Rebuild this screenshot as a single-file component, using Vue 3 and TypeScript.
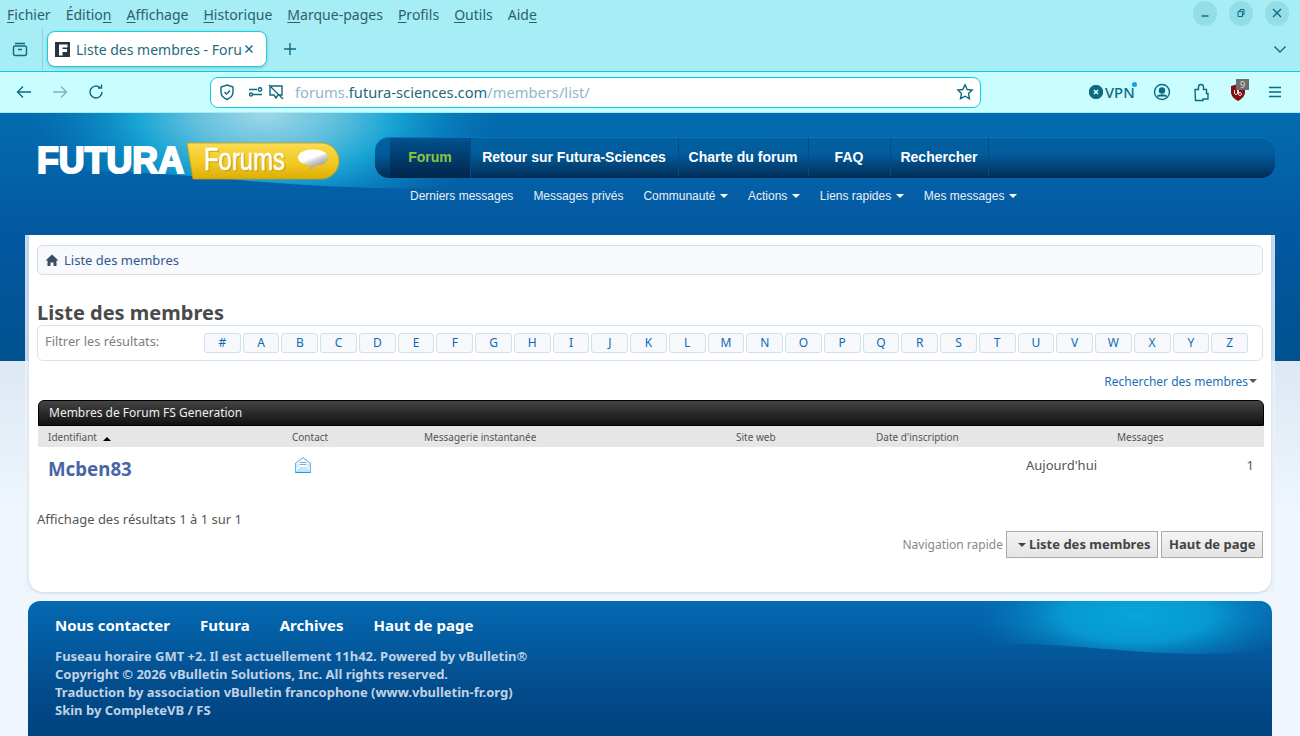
<template>
  <div class="browser">
    <div class="menubar">
      <nav class="menus">
        <span v-for="m in menus" :key="m.label" class="menu"><template v-for="(c, i) in m.label" :key="i"><u v-if="i === m.key">{{ c }}</u><template v-else>{{ c }}</template></template></span>
      </nav>
      <div class="winbtns">
        <span class="winbtn"><svg width="12" height="12" viewBox="0 0 12 12"><path d="M2.500 9h7" /></svg></span>
        <span class="winbtn"><svg class="thin" width="12" height="12" viewBox="0 0 12 12"><path d="M3 4.500h4.500v5h-4.500zM5 4.500v-2h4v5h-1.500" /></svg></span>
        <span class="winbtn"><svg width="12" height="12" viewBox="0 0 12 12"><path d="M2 2l8 8M10 2l-8 8" /></svg></span>
      </div>
    </div>
    <div class="tabbar">
      <span class="sidebtn">
        <svg width="18" height="18" viewBox="0 0 18 18"><path d="M4 3.500h10M2.500 7.500a1.500 1.500 0 0 1 1.500-1.500h10a1.500 1.500 0 0 1 1.500 1.500v6a2 2 0 0 1-2 2h-9a2 2 0 0 1-2-2zM7 9.500h4" /></svg>
      </span>
      <div class="tab">
        <span class="favicon"><svg width="15" height="15" viewBox="0 0 15 15"><rect width="15" height="15" fill="#2a3342" stroke="none" /><path d="M4 2.500h8.500v3h-5v1.500h4.500v3h-4.500v3.500h-3.500z" fill="#fff" stroke="none" /></svg></span>
        <span class="tabtitle">Liste des membres - Forum FS Generation</span>
        <svg class="tabclose" width="10" height="10" viewBox="0 0 10 10"><path d="M1.500 1.500l7 7M8.500 1.500l-7 7" /></svg>
      </div>
      <svg class="newtab" width="14" height="14" viewBox="0 0 14 14"><path d="M7 1v12M1 7h12" /></svg>
      <svg class="tabmenu" width="14" height="14" viewBox="0 0 14 14"><path d="M1.500 4.500l5.500 5.500 5.500-5.500" /></svg>
    </div>
    <div class="navbar">
      <svg class="nicon" width="18" height="18" viewBox="0 0 18 18"><path d="M16 9h-13M8 3.500l-5.500 5.500 5.500 5.500" /></svg>
      <svg class="nicon dim" width="18" height="18" viewBox="0 0 18 18"><path d="M2 9h13M10 3.500l5.500 5.500-5.500 5.500" /></svg>
      <svg class="nicon" width="18" height="18" viewBox="0 0 18 18"><path d="M15 9a6 6 0 1 1-2-4.500M14.500 1.500v3.500h-3.500" /></svg>
      <div class="urlbar">
        <svg class="uicon" width="18" height="18" viewBox="0 0 18 18"><path d="M9 2l6 2v5c0 3.500-2.500 6-6 7.500-3.500-1.500-6-4-6-7.500v-5zM6.500 9l2 2 3.500-3.500" /></svg>
        <svg class="uicon perm" width="16" height="16" viewBox="0 0 16 16"><path d="M1 5.500h8M5 10.500h9" /><circle cx="12" cy="5.500" r="1.700" /><circle cx="3" cy="10.500" r="1.500" /></svg>
        <svg class="uicon" width="18" height="18" viewBox="0 0 18 18"><path d="M3 3h12v9h-4l-2 3-2-3h-4zM2 2l14 14" /></svg>
        <span class="url"><span class="faint">forums.</span>futura-sciences.com<span class="faint">/members/list/</span></span>
        <svg class="uicon star" width="18" height="18" viewBox="0 0 18 18"><path d="M9 1.800l2.200 4.700 5 .6-3.700 3.500 1 5.100-4.500-2.500-4.500 2.500 1-5.100-3.700-3.500 5-.6z" /></svg>
      </div>
      <div class="tools">
        <span class="vpn"><svg width="14" height="14" viewBox="0 0 14 14"><circle cx="7" cy="7" r="6.500" fill="#0e6a80" /><path d="M5 5l4 4M9 5l-4 4" stroke="#d8ffff" stroke-width="1.600" /></svg>VPN<i class="dot"></i></span>
        <svg class="nicon" width="18" height="18" viewBox="0 0 18 18"><circle cx="9" cy="9" r="7.500" /><circle cx="9" cy="7.500" r="2.500" fill="#0e6a80" /><path d="M4.500 13.500c1-2 8-2 9 0" fill="#0e6a80" /></svg>
        <svg class="nicon" width="18" height="20" viewBox="0 0 18 20"><path d="M3 7.500h3.500v-2.500a2.500 2.500 0 0 1 5 0v2.500h3v4h1.500v5.500h-5v1.500h-7.500z" /></svg>
        <span class="ublock">
          <svg width="16" height="18" viewBox="0 0 16 18"><path d="M1 3l7-2 7 2v6c0 4-3 7-7 9-4-2-7-5-7-9z" fill="#800f0f" stroke="none" /><path d="M4.500 7v3a1.500 1.500 0 0 0 3 0v-3M8.500 5v6a1.500 1.500 0 0 0 3 0 1.500 1.500 0 0 0-3 0" stroke="#f2d6d6" stroke-width="1" /></svg>
          <b class="badge">9</b>
        </span>
        <svg class="nicon" width="16" height="16" viewBox="0 0 16 16"><path d="M2 3.500h12M2 8h12M2 12.500h12" /></svg>
      </div>
    </div>
  </div>

  <div class="page">
    <header class="head">
      <svg class="headglow" width="520" height="100" viewBox="0 0 520 100" aria-hidden="true">
        <defs>
          <radialGradient id="hglow" gradientUnits="userSpaceOnUse" cx="0" cy="0" r="1" gradientTransform="translate(265 0) scale(235 120)">
            <stop offset="0" stop-color="#a0d8e8" />
            <stop offset="0.3" stop-color="#62c0dd" />
            <stop offset="0.55" stop-color="#18a4d4" />
            <stop offset="0.8" stop-color="#0a86c2" stop-opacity=".6" />
            <stop offset="1" stop-color="#0a78b8" stop-opacity="0" />
          </radialGradient>
        </defs>
        <path d="M20 0H520V72C430 78 340 76 250 68C180 62 110 56 20 58Z" fill="url(#hglow)" />
      </svg>
      <a class="logo" aria-label="Futura Forums">
        <svg width="310" height="50" viewBox="0 0 310 50">
          <defs>
            <linearGradient id="gold" x1="0" y1="0" x2="0" y2="1">
              <stop offset="0" stop-color="#fbdc50" />
              <stop offset="0.55" stop-color="#f2c823" />
              <stop offset="1" stop-color="#dcae05" />
            </linearGradient>
            <linearGradient id="bubble" x1="0.2" y1="0" x2="0.8" y2="1">
              <stop offset="0" stop-color="#fff" />
              <stop offset="0.4" stop-color="#fff" />
              <stop offset="0.55" stop-color="#d4d4d4" />
              <stop offset="1" stop-color="#7e7e7e" />
            </linearGradient>
          </defs>
          <path d="M150 7h134a18 18 0 0 1 0 36h-128z" fill="url(#gold)" stroke="#c89e12" stroke-width=".8" />
          <text x="0" y="37" class="futura" textLength="147" lengthAdjust="spacingAndGlyphs">FUTURA</text>
          <text x="168" y="35" class="forums shadow" textLength="81" lengthAdjust="spacingAndGlyphs">Forums</text>
          <text x="167" y="34" class="forums" textLength="81" lengthAdjust="spacingAndGlyphs">Forums</text>
          <path d="M276 13.500c9 0 15 3 15 8s-6 8-12 8l-6 4.500 1-4.500c-6-.5-13-3-13-8s7-8 15-8z" fill="url(#bubble)" />
        </svg>
      </a>
      <div class="navs">
        <ul class="tabs">
          <li v-for="t in navTabs" :key="t.label" :class="{ on: t.on }" :style="{ width: t.w + 'px' }">{{ t.label }}</li>
        </ul>
        <ul class="subnav">
          <li v-for="s in subNav" :key="s.label">{{ s.label }}<i v-if="s.drop" class="caret"></i></li>
        </ul>
      </div>
    </header>

    <div class="wrap">
      <main class="panel">
        <div class="crumb">
          <svg width="14" height="14" viewBox="0 0 14 14"><path d="M7 1.500l6.500 6h-2v5.500h-3v-3.500h-3v3.500h-3v-5.500h-2z" fill="#3d4c5f" /></svg>
          <span>Liste des membres</span>
        </div>
        <h1>Liste des membres</h1>
        <div class="filter">
          <span class="flabel">Filtrer les résultats:</span>
          <div class="letters">
            <a v-for="l in letters" :key="l">{{ l }}</a>
          </div>
        </div>
        <div class="search">Rechercher des membres<i class="caret grey"></i></div>

        <section class="members">
          <div class="mhead">Membres de Forum FS Generation</div>
          <div class="cols">
            <span>Identifiant <i class="sort"></i></span>
            <span>Contact</span>
            <span>Messagerie instantanée</span>
            <span>Site web</span>
            <span>Date d'inscription</span>
            <span>Messages</span>
          </div>
          <div class="row">
            <a class="uname">Mcben83</a>
            <svg class="mail" width="16" height="16" viewBox="0 0 16 16">
              <path d="M.5 6l7.500-5.500 7.500 5.500v9.500h-15z" fill="#dff1fd" stroke="#58b4f0" />
              <path d="M3.500 5l4.500-3 4.500 3v6h-9z" fill="#fafcfe" />
              <path d="M4.500 5.500h7M4.500 7.500h7" stroke="#9aa9b6" />
              <path d="M1 15l5-4.500h4l5 4.500zM1 7.500l5 3M15 7.500l-5 3" fill="#c4e6fb" stroke="#a8d8f6" stroke-width=".6" />
              <path d="M.5 15.500h15" stroke="#1c9cec" />
            </svg>
            <span class="joined">Aujourd'hui</span>
            <span class="count">1</span>
          </div>
        </section>

        <p class="results">Affichage des résultats 1 à 1 sur 1</p>
        <div class="quick">
          <span class="qlabel">Navigation rapide</span>
          <button type="button" class="qfirst"><i class="caret dark"></i>Liste des membres</button>
          <button type="button">Haut de page</button>
        </div>
      </main>
    </div>

    <footer class="foot">
      <svg class="glow" width="340" height="70" viewBox="0 0 340 70" aria-hidden="true">
        <defs>
          <radialGradient id="fglow" gradientUnits="userSpaceOnUse" cx="0" cy="0" r="1" gradientTransform="translate(205 14) scale(165 60)">
            <stop offset="0" stop-color="#08a6d8" />
            <stop offset="0.45" stop-color="#079fd4" stop-opacity=".9" />
            <stop offset="1" stop-color="#0678ba" stop-opacity="0" />
          </radialGradient>
        </defs>
        <path d="M0 0H340V48C290 54 250 54 200 50C150 46 110 42 60 43C40 43 20 44 0 46Z" fill="url(#fglow)" />
      </svg>
      <ul class="flinks">
        <li v-for="f in footLinks" :key="f">{{ f }}</li>
      </ul>
      <p v-for="l in footLines" :key="l">{{ l }}</p>
    </footer>
  </div>
</template>

<script setup lang="ts">
const menus = [
  { label: 'Fichier', key: 0 },
  { label: 'Édition', key: 6 },
  { label: 'Affichage', key: 0 },
  { label: 'Historique', key: 0 },
  { label: 'Marque-pages', key: 0 },
  { label: 'Profils', key: 0 },
  { label: 'Outils', key: 0 },
  { label: 'Aide', key: 3 }
]

const navTabs = [
  { label: 'Forum', w: 80, on: true },
  { label: 'Retour sur Futura-Sciences', w: 208 },
  { label: 'Charte du forum', w: 130 },
  { label: 'FAQ', w: 82 },
  { label: 'Rechercher', w: 98 }
]

const subNav = [
  { label: 'Derniers messages' },
  { label: 'Messages privés' },
  { label: 'Communauté', drop: true },
  { label: 'Actions', drop: true },
  { label: 'Liens rapides', drop: true },
  { label: 'Mes messages', drop: true }
]

const letters = ['#', ...'ABCDEFGHIJKLMNOPQRSTUVWXYZ']

const footLinks = ['Nous contacter', 'Futura', 'Archives', 'Haut de page']
const footLines = [
  'Fuseau horaire GMT +2. Il est actuellement 11h42. Powered by vBulletin®',
  'Copyright © 2026 vBulletin Solutions, Inc. All rights reserved.',
  'Traduction by association vBulletin francophone (www.vbulletin-fr.org)',
  'Skin by CompleteVB / FS'
]
</script>

<style>
html, body { margin: 0; height: 736px; overflow: hidden; background: #eff6fd; }
</style>

<style scoped>
svg { display: block; flex: none; }
ul { list-style: none; margin: 0; padding: 0; }

.browser { height: 113px; font-family: "Noto Sans", sans-serif; color: #0e6a80; background: #a6edf5; }
.browser svg { fill: none; stroke: #0e6a80; stroke-width: 1.4; }
.browser svg.thin { stroke-width: 1; }

.menubar { height: 28px; display: flex; align-items: center; justify-content: space-between; padding: 0 11px 0 7px; }
.menus { display: flex; gap: 15px; font-size: 14px; color: #2e5f6b; }
.menu u { text-underline-offset: 2px; }
.winbtns { display: flex; gap: 12px; margin-top: -2px; }
.winbtn { width: 24px; height: 25px; border-radius: 50%; background: #93dde6; display: flex; align-items: center; justify-content: center; }

.tabbar { height: 44px; padding-bottom: 1px; display: flex; align-items: center; border-bottom: 1px solid #0fc8d8; box-sizing: border-box; }
.sidebtn { width: 43px; align-self: stretch; padding-left: 11px; box-sizing: border-box; display: flex; align-items: center; border-right: 1px solid #8fd4dc; }
.tab { width: 220px; height: 36px; margin-left: 4px; background: #fff; border: 1px solid #19cfdd; border-radius: 8px; box-sizing: border-box; display: flex; align-items: center; padding: 0 12px 0 7px; box-shadow: 0 1px 3px rgba(0, 80, 100, .25); }
.favicon { width: 15px; margin-right: 6px; }
.tabtitle { flex: 1; white-space: nowrap; overflow: hidden; font-size: 14px; color: #256a7e; }
.tabclose { margin-left: 2px; }
.newtab { margin-left: 16px; }
.tabmenu { margin-left: auto; margin-right: 13px; }

.navbar { height: 40px; background: #c9fdff; display: flex; align-items: center; padding: 0 15px; box-sizing: border-box; }
.navbar > .nicon { margin-right: 18px; }
.navbar > .nicon.dim { opacity: .45; }
.urlbar { width: 771px; height: 31px; margin-left: 87px; background: #fff; border: 1px solid #10cbde; border-radius: 8px; box-sizing: border-box; display: flex; align-items: center; padding: 0 3px 0 7px; }
.uicon { margin-right: 3px; }
.uicon.perm { margin-left: 9px; }
.url { margin-left: 7px; font-size: 14.700px; color: #1b6a80; white-space: nowrap; flex: 1; }
.faint { color: #8fb8c4; }
.tools { display: flex; align-items: center; gap: 20.500px; margin-left: 108px; }
.vpn { position: relative; display: flex; align-items: center; gap: 2px; font-size: 14.800px; font-weight: 500; margin-right: -2px; }
.dot { position: absolute; right: -2px; top: 0; width: 5px; height: 5px; border-radius: 50%; background: #0fa4f0; }
.ublock { position: relative; }
.badge { position: absolute; left: 6px; top: -4px; min-width: 13px; height: 11px; background: #6d6d6d; color: #ddd; font-size: 9px; line-height: 11px; font-weight: 400; text-align: center; }
.tools > .nicon { margin: 0; }

.page {
  height: 623px; overflow: hidden; box-sizing: border-box; font-family: "Noto Sans", "Open Sans", sans-serif;
  background: linear-gradient(#036cb0 0, #0458a0 122px, #00518f 248px, #dce8f3 248px, #eff6fd 400px, #eff6fd 100%);
}

.head { height: 122px; position: relative; display: flex; }
.headglow { position: absolute; left: 0; top: 0; }
.logo { position: relative; margin: 23px 0 0 37px; width: 338px; flex: none; }
.futura { font: 900 36px "Liberation Sans", sans-serif; fill: #fff; stroke: #fff; stroke-width: 2; }
.forums { font: 400 31px "Liberation Sans", sans-serif; fill: #fff; stroke: #fff; stroke-width: .5; }
.forums.shadow { fill: #a8860a; stroke: #a8860a; opacity: .6; }

.navs { position: relative; flex: 1; padding-right: 25px; padding-top: 24px; font-family: "Liberation Sans", sans-serif; }
.tabs {
  height: 41px; display: flex; padding-left: 15px; padding-bottom: 2px; border-radius: 14px; box-sizing: border-box;
  background: linear-gradient(#02619f, #025c9c 40%, #012c56 100%);
  border-top: 1px solid #0575c0;
}
.tabs li { height: 100%; box-sizing: border-box; display: flex; align-items: center; justify-content: center; color: #fff; font-size: 14px; font-weight: 700; white-space: nowrap; box-shadow: 1px 0 0 #034a86; }
.tabs li.on { color: #8cc63f; background: linear-gradient(#02528f, #01264a); margin-bottom: -2px; height: auto; padding-bottom: 2px; }
.subnav { display: flex; padding: 11px 0 0 35px; gap: 20px; color: #e8f0f8; font-size: 12px; line-height: 14px; }
.subnav li { display: flex; align-items: center; white-space: nowrap; }
.caret { display: inline-block; width: 0; height: 0; margin-left: 4.500px; border: 4px solid transparent; border-top-color: #fff; border-bottom: 0; }
.caret.grey { border-top-color: #555; margin-left: 1px; }
.caret.dark { border-top-color: #444; margin: 0 3px 0 0; vertical-align: 2px; }

.wrap { margin: 0 25px; padding: 0 4px; background: rgba(235, 242, 250, .85); height: 357px; }
.panel { height: 357px; background: #fff; border-radius: 0 0 14px 14px; padding: 10px 8px 0 8px; box-sizing: border-box; box-shadow: 0 1px 3px rgba(120, 140, 160, .3); color: #444; }

.crumb { height: 30px; box-sizing: border-box; display: flex; align-items: center; gap: 5px; padding-left: 7px; background: #f7f9fc; border: 1px solid #d5dfec; border-radius: 6px; font-size: 13px; color: #2e5a8e; }
h1 { margin: 25px 0 0; font-size: 20px; line-height: 25px; font-weight: 700; color: #4a4a4a; }
.filter { height: 36px; box-sizing: border-box; display: flex; align-items: flex-start; padding: 7px 14px 0 7px; border: 1px solid #d5e2ef; border-radius: 6px; }
.flabel { width: 159px; font-size: 12.800px; line-height: 17px; color: #808080; flex: none; }
.letters { flex: 1; display: grid; grid-template-columns: repeat(27, 1fr); gap: 2px; }
.letters a { height: 20px; box-sizing: border-box; background: #f6f8fb; border: 1px solid #cfdfee; border-radius: 3px; text-align: center; font-size: 12px; line-height: 18px; color: #0b6ab8; }

.search { margin-top: 12px; height: 16px; padding-right: 6px; display: flex; align-items: center; justify-content: flex-end; font-size: 12px; color: #1b6fb5; }

.members { margin: 11px -1px 0 1px; }
.mhead { height: 26px; box-sizing: border-box; padding-left: 10px; background: linear-gradient(#444, #111); border: 1px solid #000; border-radius: 6px 6px 0 0; font-size: 12px; line-height: 24px; color: #eee; }
.cols { height: 21px; background: #e6e6e6; display: grid; grid-template-columns: 244px 132px 312px 140px 241px 1fr; padding-left: 10px; align-items: center; font-size: 10px; color: #555; }
.sort { display: inline-block; width: 0; height: 0; margin-left: 3px; border: 4px solid transparent; border-bottom-color: #000; border-top: 0; }
.row { height: 44px; display: grid; grid-template-columns: 244px 734px 1fr 65px; padding: 0 10px; align-items: start; }
.uname { font-size: 18.700px; font-weight: 700; color: #4666a8; line-height: 27px; margin-top: 8px; }
.mail { margin: 10px 0 0 3px; }
.joined { grid-column: 3; margin-top: 10px; font-size: 13px; line-height: 17px; color: #555; white-space: nowrap; }
.count { margin-top: 10px; font-size: 13px; line-height: 17px; color: #555; text-align: right; }
.results { margin: 20px 0 0; font-size: 13px; line-height: 17px; color: #555; }
.quick { display: flex; justify-content: flex-end; align-items: center; gap: 3px; margin-top: 3px; }
.qlabel { font-size: 12px; color: #888; }
.quick button { height: 27px; padding: 0 6.500px 2px; font: 700 13px "Noto Sans", sans-serif; color: #444; background: linear-gradient(#f4f4f4, #e4e4e4); border: 1px solid #aaa; }
.quick .qfirst { padding-left: 11px; padding-right: 7px; }

.foot { position: relative; margin: 9px 28px 0; height: 135px; padding: 14px 27px; box-sizing: border-box; border-radius: 12px 12px 0 0; background: linear-gradient(#0569b1, #024a8a 70%, #00427f); overflow: hidden; color: #c0d2e4; }
.glow { position: absolute; right: 0; top: 0; }
.flinks { position: relative; display: flex; gap: 30px; font-size: 15px; line-height: 20px; font-weight: 700; color: #fff; margin-bottom: 12px; }
.foot p { position: relative; margin: 0; font-size: 13px; line-height: 18px; font-weight: 700; }
</style>
